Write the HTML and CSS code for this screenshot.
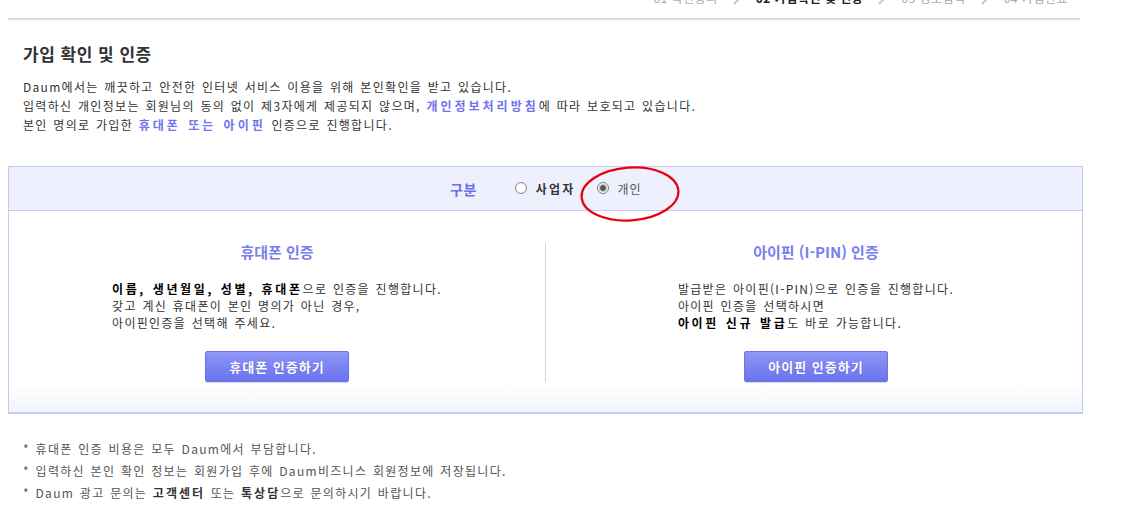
FILE: index.html
```html
<!DOCTYPE html>
<html lang="ko">
<head>
<meta charset="utf-8">
<title>가입 확인 및 인증</title>
<link rel="stylesheet" href="styles.css">
</head>
<body>
<div class="wrap">
  <div class="steps">
    <div class="steps-inner">
      <span class="step">01 약관동의</span>
      <svg class="chev" width="10" height="14" viewBox="0 0 10 14"><path d="M2 1 L8 7 L2 13" fill="none" stroke="#c8c8c8" stroke-width="2"/></svg>
      <span class="step on">02 가입확인 및 인증</span>
      <svg class="chev" width="10" height="14" viewBox="0 0 10 14"><path d="M2 1 L8 7 L2 13" fill="none" stroke="#c8c8c8" stroke-width="2"/></svg>
      <span class="step">03 정보입력</span>
      <svg class="chev" width="10" height="14" viewBox="0 0 10 14"><path d="M2 1 L8 7 L2 13" fill="none" stroke="#c8c8c8" stroke-width="2"/></svg>
      <span class="step">04 가입완료</span>
    </div>
  </div>
  <div class="rule"></div>

  <h2 class="title">가입 확인 및 인증</h2>
  <p class="intro">
    Daum에서는 깨끗하고 안전한 인터넷 서비스 이용을 위해 본인확인을 받고 있습니다.<br>
    입력하신 개인정보는 회원님의 동의 없이 제3자에게 제공되지 않으며, <b class="link">개인정보처리방침</b>에 따라 보호되고 있습니다.<br>
    본인 명의로 가입한 <b class="link">휴대폰 또는 아이핀</b> 인증으로 진행합니다.
  </p>

  <div class="box">
    <div class="box-head">
      <span class="kind">구분</span>
      <label class="opt"><input type="radio" name="kind" class="radio"><b>사업자</b></label>
      <label class="opt opt-person"><input type="radio" name="kind" class="radio" checked><span>개인</span></label>
      <svg class="circle" width="104" height="60" viewBox="0 0 104 60"><ellipse cx="52" cy="30" rx="48.5" ry="26.5" fill="none" stroke="#e8000b" stroke-width="2.2" transform="rotate(-4 52 30)"/></svg>
    </div>
    <div class="box-body">
      <div class="col">
        <h3 class="col-title">휴대폰 인증</h3>
        <p class="col-text"><b>이름, 생년월일, 성별, 휴대폰</b>으로 인증을 진행합니다.<br>갖고 계신 휴대폰이 본인 명의가 아닌 경우,<br>아이핀인증을 선택해 주세요.</p>
        <div><button class="btn">휴대폰 인증하기</button></div>
      </div>
      <div class="divider"></div>
      <div class="col col-right">
        <h3 class="col-title">아이핀 (I-PIN) 인증</h3>
        <p class="col-text">발급받은 아이핀(I-PIN)으로 인증을 진행합니다.<br>아이핀 인증을 선택하시면<br><b>아이핀 신규 발급</b>도 바로 가능합니다.</p>
        <div><button class="btn">아이핀 인증하기</button></div>
      </div>
    </div>
  </div>

  <ul class="notes">
    <li>* 휴대폰 인증 비용은 모두 Daum에서 부담합니다.</li>
    <li>* 입력하신 본인 확인 정보는 회원가입 후에 Daum비즈니스 회원정보에 저장됩니다.</li>
    <li>* Daum 광고 문의는 <b>고객센터</b> 또는 <b>톡상담</b>으로 문의하시기 바랍니다.</li>
  </ul>
</div>
</body>
</html>
```

FILE: styles.css
```css
html, body {
  margin: 0;
  padding: 0;
  background: #fff;
}
body {
  font-family: "Noto Sans CJK KR", "Noto Sans", sans-serif;
  font-size: 12px;
  color: #333;
}
.wrap {
  margin-left: 8px;
  width: 1076px;
}
.steps {
  height: 18px;
  overflow: hidden;
}
.steps-inner {
  margin-top: -10px;
  display: flex;
  justify-content: flex-end;
  align-items: center;
  gap: 14px;
  padding-right: 16px;
  line-height: 16px;
  font-size: 12px;
  letter-spacing: 0.5px;
}
.step {
  color: #a9a9a9;
}
.step.on {
  color: #222;
  font-weight: bold;
}
.chev {
  display: block;
}
.rule {
  width: 1072px;
  height: 3px;
  background: linear-gradient(to bottom, #d2d2d2 0, #d2d2d2 1px, #e6e6e6 1px, #e6e6e6 2px, #f4f4f4 2px);
}
.title {
  margin: 23px 0 0 15px;
  font-size: 17px;
  line-height: 20px;
  letter-spacing: 0.5px;
  font-weight: bold;
  color: #333;
}
.intro {
  margin: 13px 0 0 15px;
  line-height: 19px;
  letter-spacing: 1.3px;
  word-spacing: 1px;
  color: #333;
}
.link {
  color: #6e72ee;
  letter-spacing: 3px;
}
.box {
  margin-top: 32px;
  width: 1073px;
  border: 1px solid #c3c9f3;
  border-bottom-width: 2px;
}
.box-head {
  position: relative;
  height: 44px;
  background: #eef0fd;
  border-bottom: 1px solid #c3c9f3;
  display: flex;
  align-items: center;
  padding-left: 441px;
  box-sizing: border-box;
}
.kind {
  font-size: 14px;
  font-weight: bold;
  color: #6a72e6;
  margin-right: 38px;
  letter-spacing: 0.5px;
}
.opt {
  display: flex;
  align-items: center;
  letter-spacing: 2.2px;
}
.opt b {
  color: #333;
}
.opt-person {
  margin-left: 21px;
}
.opt-person span {
  color: #555;
  letter-spacing: 1px;
}
.radio {
  appearance: none;
  -webkit-appearance: none;
  width: 12px;
  height: 12px;
  margin: 0 9px 0 0;
  border: 1px solid #808080;
  border-radius: 50%;
  background: #fff;
  box-sizing: border-box;
  position: relative;
  top: -1px;
}
.radio:checked {
  background: radial-gradient(circle, #555 0, #555 2.4px, #bdbdbd 3.2px, #f3f3f3 4.5px);
}
.circle {
  position: absolute;
  left: 569px;
  top: -3px;
}
.box-body {
  display: grid;
  grid-template-columns: 536px 1px 1fr;
  background: linear-gradient(to bottom, #fff 0, #fff calc(100% - 26px), #f1f3fd 100%);
}
.col {
  padding: 31px 0 30px;
  text-align: center;
}
.col-right {
  padding-left: 4px;
}
.col-title {
  margin: 0 0 18px;
  font-size: 15px;
  line-height: 20px;
  font-weight: bold;
  color: #7880ea;
}
.col-text {
  display: inline-block;
  margin: 0 0 20px;
  text-align: left;
  line-height: 17px;
  letter-spacing: 1.3px;
  word-spacing: 1px;
  color: #333;
}
.col-text b {
  color: #000;
  letter-spacing: 2.6px;
}
.divider {
  background: #d4d4d4;
  margin: 32px 0 30px;
}
.btn {
  width: 144px;
  height: 31px;
  border: 1px solid #6c75ea;
  border-radius: 2px;
  background: linear-gradient(to bottom, #8f97f7 0, #7b84f3 50%, #6a73ee 100%);
  color: #fff;
  font-family: "Noto Sans CJK KR", sans-serif;
  font-size: 13px;
  font-weight: bold;
  letter-spacing: 1px;
  text-shadow: 0 0 1px rgba(60, 60, 160, 0.6);
  box-shadow: 0 1px 1px rgba(80, 90, 200, 0.25);
  padding: 0;
  cursor: pointer;
}
.notes {
  list-style: none;
  margin: 24px 0 0 15px;
  padding: 0;
  line-height: 22px;
  letter-spacing: 1.3px;
  word-spacing: 1px;
  color: #555;
}
.notes b {
  color: #333;
  letter-spacing: 2px;
}
```
